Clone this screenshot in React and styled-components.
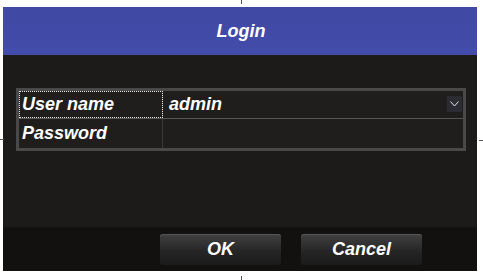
import React from "react";
import styled, { createGlobalStyle } from "styled-components";

const Global = createGlobalStyle`
  html, body { margin: 0; padding: 0; background: #ffffff; }
  body { font-family: "Liberation Sans", Arial, sans-serif; }
`;

const Page = styled.div`
  position: relative;
  width: 483px;
  height: 280px;
  padding: 7px 6px 9px 3px;
  box-sizing: border-box;
`;

const Tick = styled.span`
  position: absolute;
  background: #555;
  ${(p) => (p.$vertical ? "width: 1px; height: 4px;" : "width: 4px; height: 1px;")}
`;

const Dialog = styled.div`
  width: 474px;
  height: 264px;
  display: flex;
  flex-direction: column;
  background: #1c1b1a;
`;

const Header = styled.div`
  height: 48px;
  flex: none;
  display: flex;
  align-items: center;
  justify-content: center;
  background: linear-gradient(#3f48a2, #434caa);
  color: #ffffff;
  font-size: 18px;
  font-weight: bold;
  font-style: italic;
  padding-left: 2px;
`;

const Body = styled.div`
  flex: 1;
  padding: 33px 0 0 13px;
  background: #1c1b1a;
`;

const Table = styled.div`
  width: 444px;
  border: 3px solid #4a4949;
  background: #1f1e1d;
  display: grid;
  grid-template-columns: 144px 1fr;
  grid-template-rows: 27px 1px 29px;
`;

const Label = styled.div`
  display: flex;
  align-items: center;
  padding-left: 3px;
  color: #ffffff;
  font-size: 18px;
  font-weight: bold;
  font-style: italic;
  border-right: 1px solid #3a3938;
  outline: ${(p) => (p.$focused ? "1px dotted #e8e8e8" : "none")};
  outline-offset: -1px;
`;

const Value = styled.div`
  position: relative;
  display: flex;
  align-items: center;
  padding-left: 6px;
  color: #ffffff;
  font-size: 18px;
  font-weight: bold;
  font-style: italic;
`;

const Divider = styled.div`
  grid-column: 1 / 3;
  background: #565554;
`;

const Chevron = styled.span`
  position: absolute;
  right: 1px;
  top: 5px;
  width: 15px;
  height: 16px;
  background: #2b2c33;
  display: flex;
  align-items: center;
  justify-content: center;
`;

const Footer = styled.div`
  height: 44px;
  flex: none;
  background: #121110;
  display: flex;
  align-items: flex-start;
  padding: 7px 0 0 157px;
  gap: 20px;
  box-sizing: border-box;
`;

const Button = styled.button`
  width: 121px;
  height: 31px;
  border: none;
  border-radius: 3px;
  background: linear-gradient(#414141, #262626 55%, #1a1a1a);
  box-shadow: inset 0 1px 0 #555;
  color: #ffffff;
  font-family: "Liberation Sans", Arial, sans-serif;
  font-size: 18px;
  font-weight: bold;
  font-style: italic;
  padding: 0;
  cursor: pointer;
`;

export default function App() {
  return (
    <>
      <Global />
      <Page>
        <Tick $vertical style={{ left: 241, top: 0 }} />
        <Tick $vertical style={{ left: 241, top: 276 }} />
        <Tick style={{ left: 0, top: 139 }} />
        <Tick style={{ left: 479, top: 140 }} />
        <Dialog>
          <Header>Login</Header>
          <Body>
            <Table>
              <Label $focused>User name</Label>
              <Value>
                admin
                <Chevron>
                  <svg width="9" height="6" viewBox="0 0 9 6">
                    <path d="M0.5 0.5 L4.5 5 L8.5 0.5" fill="none" stroke="#e8e8e8" strokeWidth="1" />
                  </svg>
                </Chevron>
              </Value>
              <Divider />
              <Label>Password</Label>
              <Value />
            </Table>
          </Body>
          <Footer>
            <Button>OK</Button>
            <Button>Cancel</Button>
          </Footer>
        </Dialog>
      </Page>
    </>
  );
}
